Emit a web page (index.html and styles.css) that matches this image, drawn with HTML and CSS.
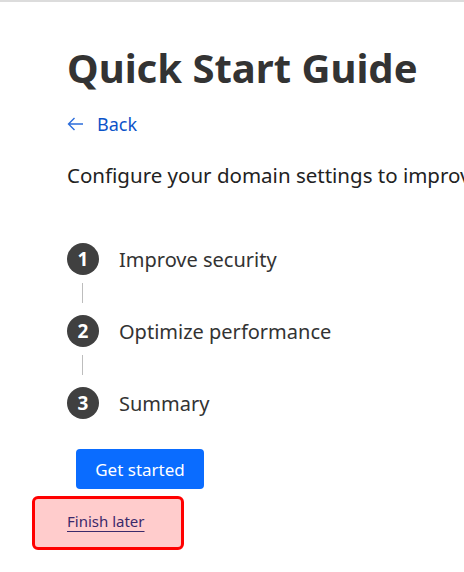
FILE: index.html
```html
<!DOCTYPE html>
<html lang="en">
<head>
<meta charset="utf-8">
<title>Quick Start Guide</title>
<link rel="stylesheet" href="styles.css">
</head>
<body>
<div class="page">
  <h1 class="title">Quick Start Guide</h1>
  <a class="back" href="#">
    <svg class="back-icon" width="17" height="14" viewBox="0 0 17 14" aria-hidden="true">
      <path d="M16 7H1.5M7.5 1L1.5 7l6 6" fill="none" stroke="currentColor" stroke-width="1.4"/>
    </svg>
    <span>Back</span>
  </a>
  <p class="intro">Configure your domain settings to improve security and performance.</p>
  <ol class="steps">
    <li class="step"><span class="num">1</span><span class="label">Improve security</span></li>
    <li class="connector"></li>
    <li class="step"><span class="num">2</span><span class="label">Optimize performance</span></li>
    <li class="connector"></li>
    <li class="step"><span class="num">3</span><span class="label">Summary</span></li>
  </ol>
  <div class="actions">
    <button class="primary" type="button">Get started</button>
    <div class="later-box"><a class="later" href="#">Finish later</a></div>
  </div>
</div>
</body>
</html>
```
FILE: styles.css
```css
html, body {
  margin: 0;
  padding: 0;
  background: #fff;
  overflow: hidden;
}
body {
  font-family: "Noto Sans", "Open Sans", sans-serif;
  color: #333;
  border-top: 2px solid #dcdcdc;
}
.page {
  padding: 38px 0 0 67px;
  white-space: nowrap;
}
.title {
  margin: 0;
  font-size: 40px;
  font-weight: 700;
  line-height: 56px;
  color: #333;
}
.back {
  display: inline-flex;
  align-items: center;
  gap: 13px;
  margin-top: 16px;
  font-size: 18px;
  line-height: 24px;
  color: #0b53c9;
  text-decoration: none;
}
.back-icon {
  color: #2c6ddb;
}
.intro {
  margin: 26px 0 0;
  font-size: 20.5px;
  line-height: 26px;
  color: #222;
}
.steps {
  list-style: none;
  margin: 55px 0 0;
  padding: 0;
}
.step {
  display: flex;
  align-items: center;
  gap: 20px;
  height: 32px;
}
.num {
  width: 32px;
  height: 32px;
  border-radius: 50%;
  background: #404040;
  color: #fff;
  font-weight: 700;
  font-size: 19px;
  display: flex;
  align-items: center;
  justify-content: center;
}
.label {
  font-size: 20px;
  color: #333;
}
.connector {
  width: 1px;
  height: 20px;
  background: #bdbdbd;
  margin: 8px 0 12px 15px;
}
.actions {
  margin-top: 30px;
  display: flex;
  flex-direction: column;
  align-items: flex-start;
}
.primary {
  margin-left: 9px;
  width: 128px;
  height: 40px;
  border: none;
  border-radius: 4px;
  background: #0a6cff;
  color: #fff;
  font-family: inherit;
  font-size: 17px;
  padding: 0;
}
.later-box {
  margin: 7px 0 0 -35px;
  width: 146px;
  height: 44px;
  padding-bottom: 4px;
  border: 3px solid #ff0000;
  border-radius: 6px;
  background: #ffcccc;
  display: flex;
  align-items: center;
}
.later {
  margin-left: 32px;
  font-size: 15px;
  color: #3b2a6b;
  text-decoration: underline;
  text-underline-offset: 4px;
}
```
